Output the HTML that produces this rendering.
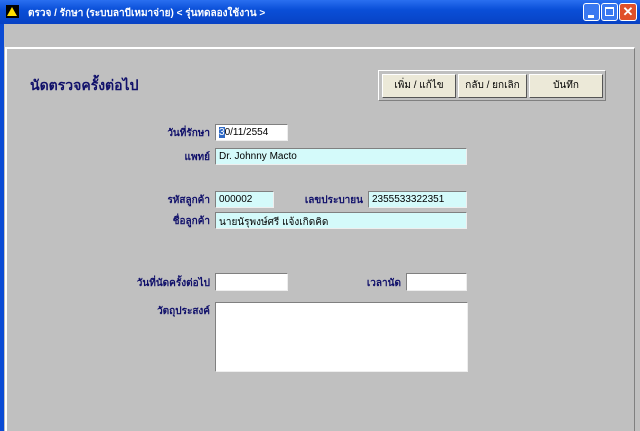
<!DOCTYPE html>
<html><head><meta charset="utf-8"><style>
*{box-sizing:border-box;margin:0;padding:0}
body{width:640px;height:431px;overflow:hidden;background:#c0c0c0;position:relative;font-family:Tahoma,"Liberation Sans","Noto Sans CJK SC",sans-serif}
.tb{position:absolute;left:0;top:0;width:640px;height:24px;background:linear-gradient(#2a6ff0,#0a4fd8 40%,#0842c4);}
.tt{position:absolute;left:28px;top:6px;color:#fff;font-size:10px;font-weight:bold}
.lb{position:absolute;left:0;top:24px;width:4px;height:407px;background:#0b4bd4}
.panel{position:absolute;left:5px;top:47px;width:630px;height:384px;border-top:2px solid #fff;border-left:2px solid #fff;border-right:1px solid #808080}
.a{position:absolute}
.lab{position:absolute;color:#10106a;font-size:10px;font-weight:bold;text-align:right}
.in{position:absolute;border-top:1px solid #808080;border-left:1px solid #808080;border-right:1px solid #eee;border-bottom:1px solid #eee;font-size:10px;padding:2px 3px;color:#000;background:#fff}
.cy{background:#d4fafa}
.btn{position:absolute;top:74px;height:24px;background:#ece9d8;border:1px solid #fff;border-right:1px solid #555;border-bottom:1px solid #555;font-size:10px;text-align:center;line-height:21px;color:#000}
</style></head><body>
<div class="tb"></div>
<div class="a" style="left:6px;top:5px;width:13px;height:13px;background:#000"></div>
<div class="a" style="left:7px;top:7px;width:0;height:0;border-left:5px solid transparent;border-right:5px solid transparent;border-bottom:9px solid #ffe000"></div>
<div class="tt">ตรวจ / รักษา (ระบบลาบีเหมาจ่าย) &lt; รุ่นทดลองใช้งาน &gt;</div>
<div class="a" style="left:583px;top:3px;width:17px;height:18px;background:#3a78f0;border:1px solid #fff;border-radius:3px"><div class="a" style="left:4px;top:11px;width:6px;height:3px;background:#fff"></div></div>
<div class="a" style="left:601px;top:3px;width:17px;height:18px;background:#3a78f0;border:1px solid #fff;border-radius:3px"><div class="a" style="left:3px;top:3px;width:9px;height:9px;border:1px solid #fff;border-top:2px solid #fff"></div></div>
<div class="a" style="left:619px;top:3px;width:18px;height:18px;background:#e0502a;border:1px solid #fff;border-radius:3px;color:#fff;font-size:13px;font-weight:bold;text-align:center;line-height:16px">✕</div>
<div class="lb"></div>
<div class="panel"></div>
<div class="a" style="left:30px;top:75px;color:#10106a;font-size:14px;font-weight:bold">นัดตรวจครั้งต่อไป</div>
<div class="a" style="left:378px;top:70px;width:228px;height:31px;border:1px solid #fff;border-right:1px solid #808080;border-bottom:1px solid #808080"></div>
<div class="btn" style="left:382px;width:74px">เพิ่ม / แก้ไข</div>
<div class="btn" style="left:458px;width:69px">กลับ / ยกเลิก</div>
<div class="btn" style="left:529px;width:74px">บันทึก</div>
<div class="lab" style="left:120px;width:90px;top:126px">วันที่รักษา</div>
<div class="in" style="left:215px;top:124px;width:73px;height:17px"><span style="background:#316ac5;color:#fff">3</span>0/11/2554</div>
<div class="lab" style="left:120px;width:90px;top:150px">แพทย์</div>
<div class="in cy" style="left:215px;top:148px;width:252px;height:17px">Dr. Johnny Macto</div>
<div class="lab" style="left:120px;width:90px;top:193px">รหัสลูกค้า</div>
<div class="in cy" style="left:215px;top:191px;width:59px;height:17px">000002</div>
<div class="lab" style="left:270px;width:93px;top:193px">เลขประบายน</div>
<div class="in cy" style="left:368px;top:191px;width:99px;height:17px">2355533322351</div>
<div class="lab" style="left:120px;width:90px;top:214px">ชื่อลูกค้า</div>
<div class="in cy" style="left:215px;top:212px;width:252px;height:17px">นายนัรุพงษ์ศรี แจ้งเกิดคิด</div>
<div class="lab" style="left:100px;width:110px;top:276px">วันที่นัดครั้งต่อไป</div>
<div class="in" style="left:215px;top:273px;width:73px;height:18px"></div>
<div class="lab" style="left:320px;width:81px;top:276px">เวลานัด</div>
<div class="in" style="left:406px;top:273px;width:61px;height:18px"></div>
<div class="lab" style="left:120px;width:90px;top:304px">วัตถุประสงค์</div>
<div class="in" style="left:215px;top:302px;width:253px;height:70px"></div>
</body></html>
